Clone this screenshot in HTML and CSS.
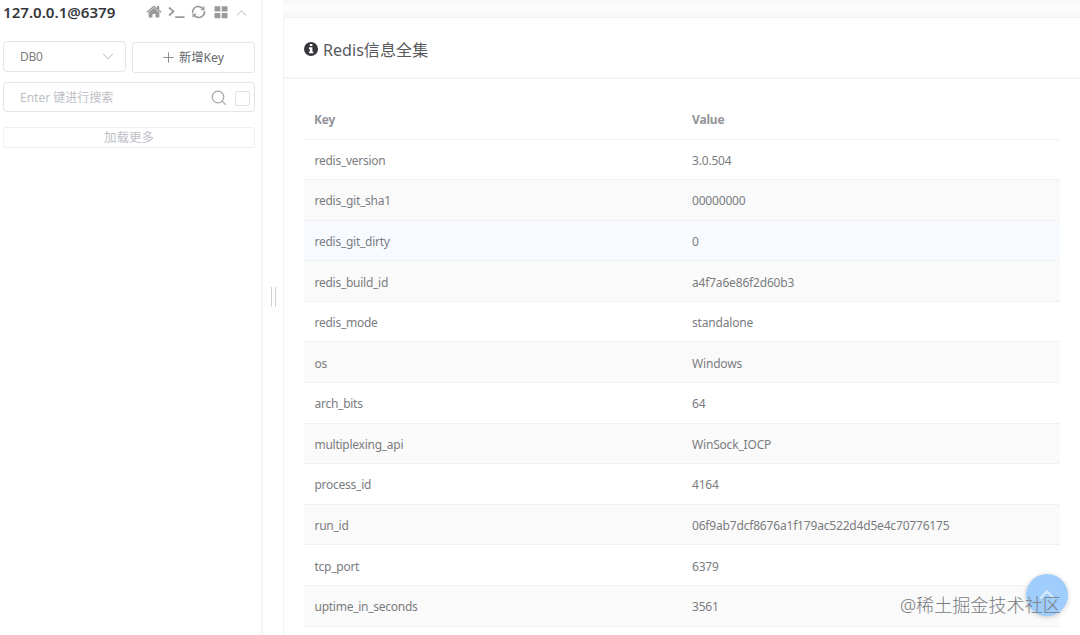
FILE: index.html
```html
<!DOCTYPE html>
<html lang="zh-CN">
<head>
    <meta charset="UTF-8">
    <meta name="viewport" content="width=device-width, initial-scale=1.0">
    <title>Redis</title>
    <link rel="stylesheet" href="styles.css">
</head>
<body>
    <div class="layout">
        <aside class="sidebar">
            <div class="connection">
                <span class="connection-name">127.0.0.1@6379</span>
                <div class="connection-icons">
                    <svg class="icon-home" width="16" height="14" viewBox="0 0 16 14">
                        <path d="M8 2.8L2.6 7.3V12.6h3.9V9h3v3.6h3.9V7.3z"/>
                        <path d="M8 .4L.3 6.8l.9 1L8 2.2l6.8 5.6.9-1-2.5-2.1V.9h-2.1v2z"/>
                    </svg>
                    <svg class="icon-terminal" width="17" height="14" viewBox="0 0 17 14">
                        <path d="M1 2.5l4.5 4L1 10.5M7.2 12.2h9.3"/>
                    </svg>
                    <svg class="icon-refresh" width="15" height="14" viewBox="0 0 15 14">
                        <path d="M1.6 8.2A5.6 5.6 0 0 1 8 1.6M13.4 5.8A5.6 5.6 0 0 1 7 12.4"/>
                        <path d="M8 1.6A5.6 5.6 0 0 1 12 3.7M7 12.4A5.6 5.6 0 0 1 3 10.3"/>
                        <path class="fill" d="M13.5 1v4.2H9.3zM1.5 13V8.8h4.2z"/>
                    </svg>
                    <svg class="icon-grid" width="14" height="13" viewBox="0 0 14 13">
                        <path d="M.5.3h5.8v5.2H.5zM7.7.3h5.8v5.2H7.7zM.5 7h5.8v5.2H.5zM7.7 7h5.8v5.2H7.7z"/>
                    </svg>
                    <svg class="icon-up" width="11" height="6" viewBox="0 0 11 6">
                        <path d="M.8 5.3L5.5.9l4.7 4.4"/>
                    </svg>
                </div>
            </div>
            <div class="operate">
                <div class="select">
                    <span>DB0</span>
                    <svg width="12" height="7" viewBox="0 0 12 7"><path d="M1 .8l5 5 5-5"/></svg>
                </div>
                <button class="button">
                    <svg width="11" height="11" viewBox="0 0 11 11"><path d="M5.5 .3v10.4M.3 5.5h10.4"/></svg>
                    <span>新增Key</span>
                </button>
            </div>
            <div class="search">
                <span class="placeholder">Enter 键进行搜索</span>
                <svg width="16" height="16" viewBox="0 0 16 16"><circle cx="7" cy="7" r="5.8"/><path d="M11.2 11.2l3.6 3.6"/></svg>
                <span class="checkbox"></span>
            </div>
            <div class="load-more">加载更多</div>
        </aside>
        <div class="drag-bar"><span class="drag-pointer"></span></div>
        <main class="content">
            <div class="card-above"></div>
            <section class="card">
                <div class="card-header">
                    <svg width="14" height="14" viewBox="0 0 14 14">
                        <circle cx="7" cy="7" r="7"/>
                        <path d="M5.8 2h2.6v2.1H5.8zM4.9 5.3h3.5v4.4h1v1.6H4.9V9.7h.9V6.9h-.9z"/>
                    </svg>
                    <span>Redis信息全集</span>
                </div>
                <table class="info-table">
                    <thead>
                        <tr><th>Key</th><th>Value</th></tr>
                    </thead>
                    <tbody>
                        <tr><td>redis_version</td><td>3.0.504</td></tr>
                        <tr><td>redis_git_sha1</td><td>00000000</td></tr>
                        <tr class="hover"><td>redis_git_dirty</td><td>0</td></tr>
                        <tr><td>redis_build_id</td><td>a4f7a6e86f2d60b3</td></tr>
                        <tr><td>redis_mode</td><td>standalone</td></tr>
                        <tr><td>os</td><td>Windows</td></tr>
                        <tr><td>arch_bits</td><td>64</td></tr>
                        <tr><td>multiplexing_api</td><td>WinSock_IOCP</td></tr>
                        <tr><td>process_id</td><td>4164</td></tr>
                        <tr><td>run_id</td><td>06f9ab7dcf8676a1f179ac522d4d5e4c70776175</td></tr>
                        <tr><td>tcp_port</td><td>6379</td></tr>
                        <tr><td>uptime_in_seconds</td><td>3561</td></tr>
                    </tbody>
                </table>
            </section>
        </main>
    </div>
    <div class="backtop">
        <svg width="16" height="10" viewBox="0 0 16 10"><path d="M1 8.5l7-7 7 7"/></svg>
    </div>
    <div class="watermark">@稀土掘金技术社区</div>
</body>
</html>
```

FILE: styles.css
```css
* {
    box-sizing: border-box;
}

body {
    margin: 0;
    height: 635px;
    overflow: hidden;
    position: relative;
    background: #fff;
    color: #7a7c7f;
    font-family: "Noto Sans", "Noto Sans CJK SC", sans-serif;
    font-size: 12px;
}

svg {
    display: block;
    flex: none;
    fill: none;
    stroke: #b4b7bd;
}

.layout {
    display: flex;
    height: 635px;
}

.sidebar {
    width: 263px;
    padding: 0 6px 0 3px;
    border-right: 2px solid #f5f5f5;
}

.connection {
    display: flex;
    justify-content: space-between;
    height: 24px;
    padding-right: 8px;
}

.connection-name {
    font-size: 15.1px;
    font-weight: 600;
    line-height: 24px;
    color: #36383c;
}

.connection-icons {
    display: flex;
    align-items: center;
    gap: 6px;
}

.icon-home,
.icon-grid {
    fill: #9a9a9c;
    stroke: none;
}

.icon-terminal,
.icon-refresh {
    stroke: #9a9a9c;
    stroke-width: 1.7;
}

.icon-refresh .fill {
    fill: #9a9a9c;
    stroke: none;
}

.icon-grid {
    margin-left: 2px;
}

.icon-up {
    margin: 2px 0 0 2px;
}

.operate {
    display: flex;
    gap: 6px;
    margin-top: 17px;
}

.select {
    display: flex;
    align-items: center;
    justify-content: space-between;
    width: 123px;
    height: 31px;
    padding: 0 11px 0 16px;
    border: 1px solid #e4e6eb;
    border-radius: 4px;
    letter-spacing: -0.3px;
}

.button {
    display: flex;
    align-items: center;
    justify-content: center;
    gap: 5px;
    width: 123px;
    height: 31px;
    margin-top: 1px;
    padding: 0 0 2px;
    border: 1px solid #e4e6eb;
    border-radius: 3px;
    background: #fff;
    color: #66686c;
    font-family: inherit;
    font-size: 12.3px;
}

.button svg {
    margin-top: 2px;
    stroke: #8b8e93;
}

.search {
    display: flex;
    align-items: center;
    height: 30px;
    margin-top: 9px;
    padding: 0 4px 0 16px;
    border: 1px solid #e1e4e9;
    border-radius: 4px;
}

.placeholder {
    flex: 1;
    color: #bdc0c6;
}

.search svg {
    margin-top: 2px;
    stroke: #a2a5ab;
    stroke-width: 1.2;
}

.checkbox {
    width: 15px;
    height: 15px;
    margin: 3px 0 0 8px;
    border: 1px solid #dfe3e8;
    border-radius: 2px;
}

.load-more {
    height: 21px;
    margin-top: 15px;
    border: 1px solid #eff0f3;
    border-radius: 2px;
    color: #bdc0c6;
    font-size: 12.5px;
    line-height: 20px;
    text-align: center;
}

.drag-bar {
    display: flex;
    align-items: center;
    justify-content: center;
    width: 20px;
    padding-bottom: 42px;
}

.drag-pointer {
    width: 5px;
    height: 20px;
    border: solid #d2d2d2;
    border-width: 0 1px;
}

.content {
    flex: 1;
}

.card-above {
    height: 17px;
    background: linear-gradient(#f8f8f8 4px, #fcfcfc 4px, #fcfcfc 12px, #f8f8f8 12px);
}

.card {
    height: 640px;
    border: solid #f1f2f4;
    border-width: 1px 0 0 1px;
    border-radius: 3px 0 0 0;
}

.card-header {
    display: flex;
    align-items: center;
    gap: 5px;
    height: 61px;
    padding: 3px 0 0 20px;
    border-bottom: 2px solid #f5f5f6;
    color: #58595c;
    font-size: 16.1px;
}

.card-header circle {
    fill: #35373a;
    stroke: none;
}

.card-header path {
    fill: #fff;
    stroke: none;
}

.info-table {
    width: 756px;
    margin: 20px 0 0 20px;
    border-collapse: separate;
    border-spacing: 0;
    table-layout: fixed;
}

.info-table th,
.info-table td {
    height: 40.58px;
    padding: 2px 10px 0;
    border-bottom: 1px solid #eff1f4;
    letter-spacing: -0.18px;
    text-align: left;
}

.info-table td:first-child {
    padding-left: 10.5px;
    letter-spacing: -0.26px;
}

.info-table th {
    color: #929499;
    font-weight: 700;
}

.info-table tbody tr:nth-child(even) {
    background: #fafafa;
}

.info-table tbody tr.hover {
    background: #f7fbff;
}

.backtop {
    display: flex;
    align-items: center;
    justify-content: center;
    position: absolute;
    top: 574px;
    left: 1026px;
    width: 42px;
    height: 42px;
    border-radius: 50%;
    background: #9fcdfc;
    box-shadow: 0 1px 5px rgba(0, 0, 0, 0.2);
}

.backtop svg {
    stroke: #d9ecff;
    stroke-width: 2;
}

.watermark {
    position: absolute;
    top: 592px;
    left: 900px;
    color: #777a7e;
    font-size: 18.1px;
    font-weight: 300;
    line-height: 26px;
    white-space: nowrap;
}
```
